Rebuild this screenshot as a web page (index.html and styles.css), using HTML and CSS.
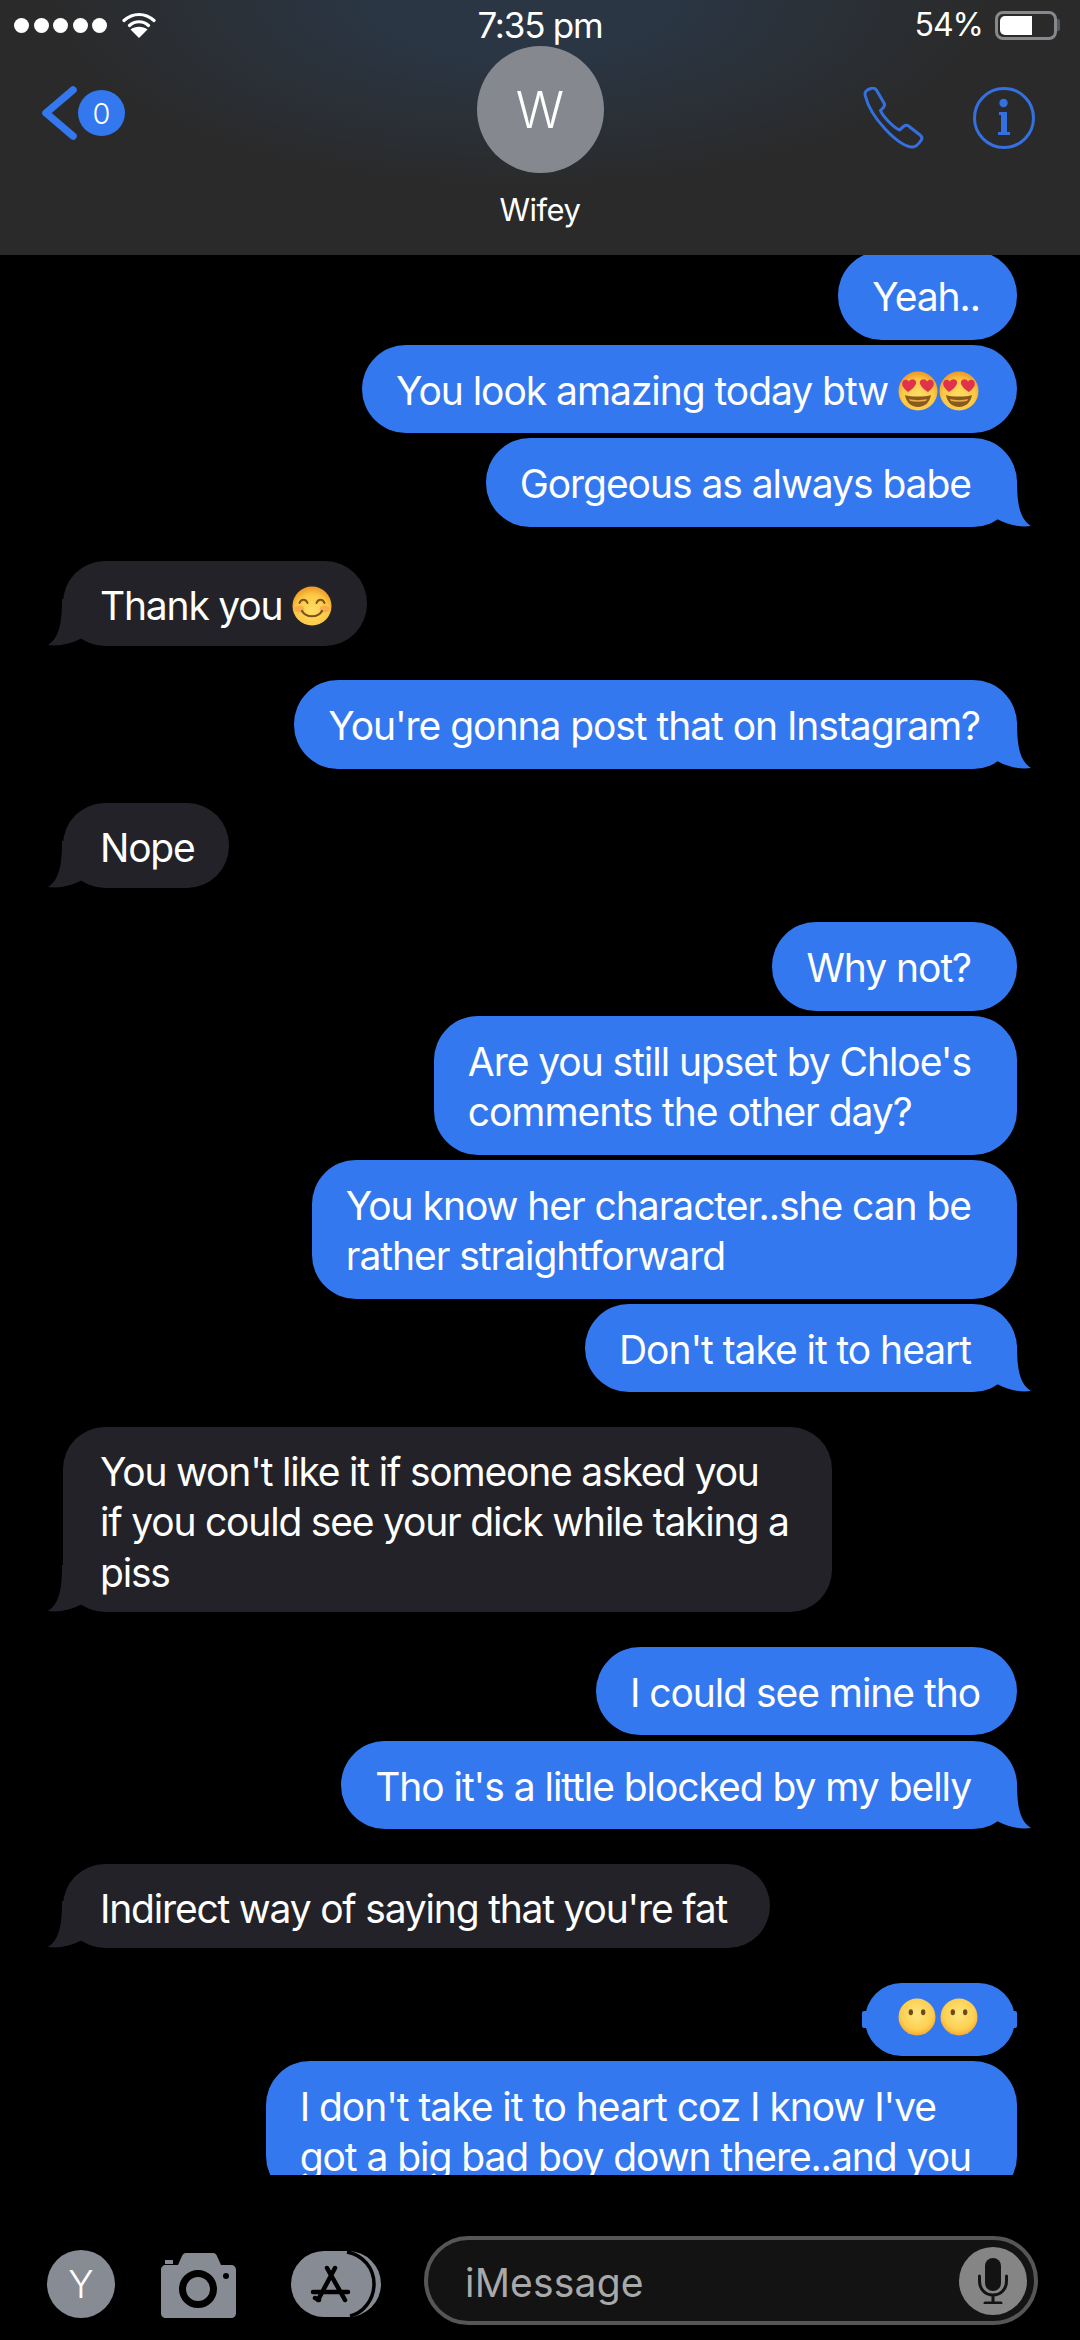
FILE: index.html
```html
<!DOCTYPE html>
<html lang="en">
<head>
<meta charset="utf-8">
<title>Wifey</title>
<link rel="stylesheet" href="styles.css">
</head>
<body>
<svg class="defs" width="0" height="0" aria-hidden="true">
  <defs>
    <radialGradient id="face" cx="50%" cy="62%" r="58%">
      <stop offset="0" stop-color="#ffdd67"/>
      <stop offset="0.7" stop-color="#fdc944"/>
      <stop offset="1" stop-color="#ef9f2a"/>
    </radialGradient>
    <radialGradient id="facepale" cx="50%" cy="42%" r="60%">
      <stop offset="0" stop-color="#ffe680"/>
      <stop offset="0.7" stop-color="#fdcf50"/>
      <stop offset="1" stop-color="#f4a52e"/>
    </radialGradient>
    <symbol id="tail" viewBox="0 0 34 47"><path d="M20 0C20 25 23 39 34 46C23 47.5 11 45 0 39V0Z"/></symbol>
    <symbol id="e-hearts" viewBox="0 0 40 40">
      <circle cx="20" cy="20" r="19.5" fill="url(#face)"/>
      <path d="M7 24C12 26 28 26 33 24C32 31 27 36 20 36S8 31 7 24Z" fill="#8a5a1c"/>
      <path d="M11 28C16 29.500 24 29.500 29 28L28 30C23 31 17 31 12 30Z" fill="#e8b050"/>
      <path d="M10 21C5 17 3.500 14 4.500 11C5.500 8.500 9 8 11 10.500C12.500 7.500 16.500 7.500 18 10.500C19 13.500 15 18 10 21Z" fill="#e0324a"/>
      <path d="M30 21C35 17 36.500 14 35.500 11C34.500 8.500 31 8 29 10.500C27.500 7.500 23.500 7.500 22 10.500C21 13.500 25 18 30 21Z" fill="#e0324a"/>
    </symbol>
    <symbol id="e-smile" viewBox="0 0 40 40">
      <circle cx="20" cy="20" r="19.500" fill="url(#face)"/>
      <ellipse cx="7.500" cy="23" rx="5" ry="3.500" fill="#f59a4c" opacity=".6"/>
      <ellipse cx="32.500" cy="23" rx="5" ry="3.500" fill="#f59a4c" opacity=".6"/>
      <path d="M7.500 17C9 12.500 14 12.500 15.500 17M24.500 17C26 12.500 31 12.500 32.500 17" fill="none" stroke="#7c5216" stroke-width="2" stroke-linecap="round"/>
      <path d="M10 25C14 32 26 32 30 25" fill="none" stroke="#7c5216" stroke-width="2.200" stroke-linecap="round"/>
    </symbol>
    <symbol id="e-nomouth" viewBox="0 0 40 40">
      <circle cx="20" cy="20" r="19.500" fill="url(#facepale)"/>
      <ellipse cx="13.500" cy="15" rx="2.300" ry="3.100" fill="#6f4a12"/>
      <ellipse cx="26.500" cy="15" rx="2.300" ry="3.100" fill="#6f4a12"/>
    </symbol>
  </defs>
</svg>

<div class="screen">
  <header class="header">
    <div class="status">
      <div class="status-left">
        <div class="signal"><i></i><i></i><i></i><i></i><i></i></div>
        <svg class="wifi" viewBox="0 0 34 26">
          <path d="M2 8.500C11 .5 23 .5 32 8.500M7.500 13.500C13 8.500 21 8.500 26.500 13.500" fill="none" stroke="#fff" stroke-width="3.200" stroke-linecap="round"/>
          <path d="M17 26L8.500 17.500C13 13.800 21 13.800 25.500 17.500Z" fill="#fff"/>
        </svg>
      </div>
      <div class="time">7:35 pm</div>
      <div class="status-right">
        <span class="pct">54%</span>
        <div class="battery"><div class="battery-fill"></div></div>
        <div class="battery-nub"></div>
      </div>
    </div>
    <div class="nav">
      <div class="nav-left">
        <svg class="chev" viewBox="0 0 39 56"><path d="M34 5L7 28L34 51" fill="none" stroke="#3478f0" stroke-width="7.500" stroke-linecap="round" stroke-linejoin="round"/></svg>
        <div class="badge">0</div>
      </div>
      <div class="contact">
        <div class="avatar">W</div>
        <div class="name">Wifey</div>
      </div>
      <div class="nav-right">
        <svg class="phone" viewBox="0 0 62 62"><path d="M3.500 9.500C2 5 4 3 9.500 1.200C12 .5 13.500 1.500 15 4L22 16C23 18 22.500 19.500 21 21L18.500 23.500C20.500 29 31 40 37.500 43L41.500 39.500C43.500 38 45 38 46.500 39L58 48C60.500 50 60.500 51.500 59 53.500C56 58 53 60.500 49.500 60C35 58 8.500 30 3.500 9.500Z" fill="none" stroke="#3470e0" stroke-width="3" stroke-linejoin="round"/></svg>
        <svg class="info" viewBox="0 0 62 62">
          <circle cx="31" cy="31" r="29.500" fill="none" stroke="#3470e0" stroke-width="3"/>
          <circle cx="30.500" cy="16" r="4.200" fill="#3470e0"/>
          <path d="M26 25H34V45H37V48H25V45H28V28H26Z" fill="#3470e0"/>
        </svg>
      </div>
    </div>
  </header>

  <main class="thread">
    <div class="msg sent pad-s first">Yeah..</div>
    <div class="msg sent pad-s tight">You look amazing today btw <svg class="emoji"><use href="#e-hearts"/></svg><svg class="emoji"><use href="#e-hearts"/></svg></div>
    <div class="msg sent tight">Gorgeous as always babe<svg class="tail"><use href="#tail"/></svg></div>

    <div class="msg recv group">Thank you <svg class="emoji"><use href="#e-smile"/></svg><svg class="tail"><use href="#tail"/></svg></div>

    <div class="msg sent pad-s group">You're gonna post that on Instagram?<svg class="tail"><use href="#tail"/></svg></div>

    <div class="msg recv group">Nope<svg class="tail"><use href="#tail"/></svg></div>

    <div class="msg sent group">Why not?</div>
    <div class="msg sent tight">Are you still upset by Chloe's<br>comments the other day?</div>
    <div class="msg sent tight">You know her character..she can be<br>rather straightforward</div>
    <div class="msg sent tight">Don't take it to heart<svg class="tail"><use href="#tail"/></svg></div>

    <div class="msg recv wide group">You won't like it if someone asked you<br>if you could see your dick while taking a<br>piss<svg class="tail"><use href="#tail"/></svg></div>

    <div class="msg sent pad-s group">I could see mine tho</div>
    <div class="msg sent tight">Tho it's a little blocked by my belly<svg class="tail"><use href="#tail"/></svg></div>

    <div class="msg recv wide group">Indirect way of saying that you're fat<svg class="tail"><use href="#tail"/></svg></div>

    <div class="msg sent group only-emoji"><svg class="emoji"><use href="#e-nomouth"/></svg><svg class="emoji"><use href="#e-nomouth"/></svg></div>
    <div class="msg sent tight">I don't take it to heart coz I know I've<br>got a big bad boy down there..and you</div>
  </main>

  <footer class="composer">
    <div class="contact-chip">Y</div>
    <svg class="camera" viewBox="0 0 75 65">
      <path d="M4 7H12V11H4Z" fill="#878b93"/>
      <path d="M5 12H17L21 3C22 1 23 0 25 0H52C54 0 55 1 56 3L60 12H70C73 12 75 14 75 17V60C75 63 73 65 70 65H5C2 65 0 63 0 60V17C0 14 2 12 5 12Z" fill="#878b93"/>
      <circle cx="37" cy="36" r="15.500" fill="none" stroke="#000" stroke-width="7"/>
      <circle cx="65" cy="23" r="3" fill="#000"/>
    </svg>
    <svg class="apps" viewBox="0 0 90 66">
      <rect x="0" y="0" width="90" height="66" rx="33" fill="#878b93"/>
      <path d="M56 1C72 4 83 17 83 33C83 49 72 62 59 65" fill="none" stroke="#000" stroke-width="3.500"/>
      <path d="M36 17L54 49M44 17L27 49M22 41H57M24 47L28 49" fill="none" stroke="#000" stroke-width="4.500" stroke-linecap="round"/>
    </svg>
    <div class="input">
      <span class="placeholder">iMessage</span>
      <div class="mic">
        <svg class="mic-glyph" viewBox="0 0 30 46">
          <rect x="7" y="0" width="16" height="33" rx="8" fill="#131313"/>
          <path d="M1.500 18V23C1.500 31 7 37 15 37S28.500 31 28.500 23V18M15 37V45M7 45H23" fill="none" stroke="#131313" stroke-width="3" stroke-linecap="round"/>
        </svg>
      </div>
    </div>
  </footer>
</div>
</body>
</html>
```

FILE: styles.css
```css
* { box-sizing: border-box; }
html, body { margin: 0; padding: 0; background: #000; }
body { font-family: Inter, "Noto Sans", "Liberation Sans", sans-serif; color: #fff; }
.defs { position: absolute; }

.screen { width: 1080px; height: 2340px; display: flex; flex-direction: column; overflow: hidden; background: #000; }

/* header */
.header {
  height: 255px; flex: none; display: flex; flex-direction: column;
  background: radial-gradient(ellipse 480px 190px at 520px 0, #2a3644 0%, #2a3644 30%, rgba(42,42,42,0) 100%), #2a2a2a;
}
.status { height: 46px; display: grid; grid-template-columns: 1fr auto 1fr; align-items: center; padding: 4px 20px 0; }
.status-left { display: flex; align-items: center; gap: 15px; margin-left: -6px; }
.signal { display: flex; gap: 4.500px; }
.signal i { width: 15px; height: 15px; border-radius: 50%; background: #fff; display: block; }
.wifi { width: 34px; height: 26px; }
.time { font-size: 35px; letter-spacing: -1.200px; line-height: 40px; }
.status-right { display: flex; align-items: center; justify-content: flex-end; }
.pct { font-size: 32px; letter-spacing: -1px; margin-right: 12px; line-height: 40px; }
.battery { width: 62px; height: 29px; border: 3px solid #85888c; border-radius: 8px; padding: 2px; }
.battery-fill { width: 32px; height: 100%; background: #fff; border-radius: 5px 0 0 5px; }
.battery-nub { width: 3px; height: 12px; background: #55585c; border-radius: 0 2px 2px 0; }

.nav { display: grid; grid-template-columns: 1fr auto 1fr; align-items: start; padding: 0 39px; }
.nav-left { display: flex; align-items: center; margin-top: 39px; }
.chev { width: 39px; height: 56px; }
.badge { width: 47px; height: 46px; border-radius: 50%; background: #3478f0; display: flex; align-items: center; justify-content: center; font-size: 29px; font-weight: 300; }
.contact { display: flex; flex-direction: column; align-items: center; }
.avatar { width: 127px; height: 127px; border-radius: 50%; background: #85888f; display: flex; align-items: center; justify-content: center; font-size: 50px; font-weight: 300; }
.name { font-size: 31px; line-height: 40px; margin-top: 17px; letter-spacing: -.5px; }
.nav-right { display: flex; justify-content: flex-end; gap: 49px; margin: 41px 6px 0 0; }
.phone { width: 62px; height: 62px; }
.info { width: 62px; height: 62px; }

/* thread */
.thread { height: 1920px; flex: none; display: flex; flex-direction: column; align-items: flex-start; padding: 0 63px; overflow: hidden; }
.msg {
  position: relative; flex: none; white-space: nowrap; font-size: 39px; line-height: 50.500px; letter-spacing: -1.050px;
  padding: 21px 46px 17px 34px; border-radius: 44px;
}
.sent { align-self: flex-end; background: #3478f0; }
.pad-s { padding-right: 37px; }
.recv { align-self: flex-start; background: #232228; padding: 20px 34px 14px 37px; border-radius: 42px; letter-spacing: -1.200px; }
.wide { padding-right: 43px; }
.first { margin-top: -4px; }
.tight { margin-top: 5.100px; }
.group { margin-top: 34.500px; }
.tail { position: absolute; bottom: 0; width: 34px; height: 47px; }
.sent .tail { right: -14px; fill: #3478f0; }
.recv .tail { left: -15px; fill: #232228; transform: scaleX(-1); }
.emoji { display: inline-block; width: 40px; height: 40px; vertical-align: -6px; margin-right: 1px; }

.only-emoji { padding: 15px 37px 15px 33px; height: 73px; margin-right: 2px; line-height: 38px; border-radius: 37px; display: flex; gap: 4px; }
.only-emoji::before { content: ""; position: absolute; left: -3px; right: -2px; top: 28px; height: 17px; background: #3478f0; border-radius: 2px; }
.only-emoji .emoji { position: relative; width: 38px; height: 38px; margin: 0; }

/* composer */
.composer { flex: 1; display: flex; align-items: flex-start; padding: 61px 0 0 47px; }
.contact-chip { width: 68px; height: 68px; border-radius: 50%; background: #878b93; display: flex; align-items: center; justify-content: center; font-size: 38px; font-weight: 300; margin: 14px 46px 0 0; }
.camera { width: 75px; height: 65px; margin: 17px 55px 0 0; flex: none; }
.apps { width: 90px; height: 66px; margin: 15px 43px 0 0; flex: none; }
.input { width: 614px; height: 89px; border: 4px solid #565656; border-radius: 45px; background: #131313; display: flex; align-items: center; justify-content: space-between; padding: 0 7px 0 37px; }
.placeholder { font-size: 39px; color: #a9a9a9; letter-spacing: .2px; padding-top: 4px; }
.mic { width: 68px; height: 68px; border-radius: 50%; background: #858585; display: flex; align-items: center; justify-content: center; }
.mic-glyph { width: 30px; height: 46px; }
```
